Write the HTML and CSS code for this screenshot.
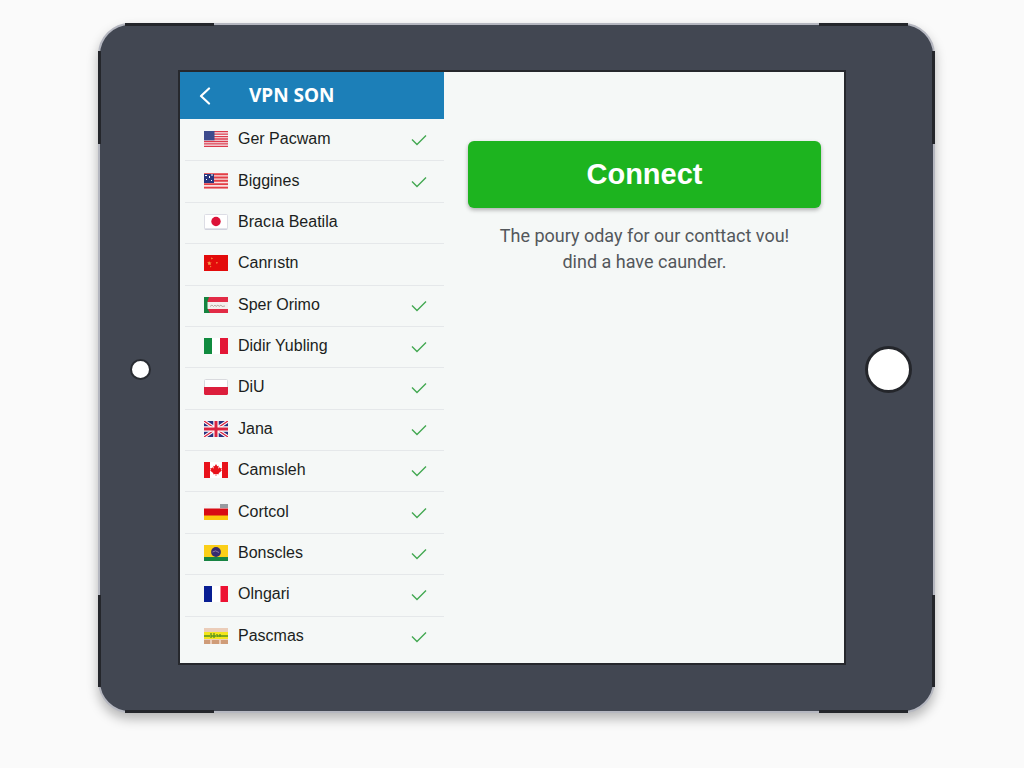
FILE: index.html
```html
<!DOCTYPE html>
<html lang="en">
<head>
<meta charset="utf-8">
<meta name="viewport" content="width=device-width, initial-scale=1">
<title>VPN SON</title>
<link rel="stylesheet" href="styles.css">
</head>
<body>
<div class="tablet">
  <div class="bezel"><span class="camera"></span></div>
  <main class="screen">
    <nav class="sidebar">
      <header class="titlebar">
        <button class="back" type="button" aria-label="Back"><svg width="12" height="18" viewBox="0 0 12 18"><path d="M10 1.500L2 9L10 16.500" fill="none" stroke="#fff" stroke-width="2.200" stroke-linecap="round" stroke-linejoin="round"/></svg></button>
        <h1 class="title">VPN SON</h1>
      </header>
      <ul class="servers">
        <li class="row"><button class="server" type="button">
          <svg class="flag" viewBox="0 0 24 16"><path fill="#f6eef0" d="M0 0h24v16H0z"/><path stroke="#dc3a4c" stroke-width="1.300" d="M0 .7h24M0 3.100h24M0 5.600h24M0 8h24M0 10.500h24M0 12.900h24M0 15.300h24"/><path fill="#3d4b8d" d="M0 0h10.500v9.300H0z"/></svg>
          <span class="name">Ger Pacwam</span><svg class="check" viewBox="0 0 16 12"><path d="M1 5.500L6 10.500L15 1.500"/></svg></button></li>
        <li class="row"><button class="server" type="button">
          <svg class="flag" viewBox="0 0 24 16"><path fill="#f8e0e0" d="M0 0h24v16H0z"/><path stroke="#e23f46" stroke-width="1.900" d="M0 1.200h24M0 4.500h24M0 7.800h24M0 11.100h24M0 14.600h24"/><path fill="#29377f" d="M0 1h10v9H0z"/><path fill="#fff" d="M1 2h2v1H1zM5 3h1v2H5zM2 6h1v1H2zM7 1.500h2v1H7zM7 7h1v1H7z"/></svg>
          <span class="name">Biggines</span><svg class="check" viewBox="0 0 16 12"><path d="M1 5.500L6 10.500L15 1.500"/></svg></button></li>
        <li class="row"><button class="server" type="button">
          <svg class="flag" viewBox="0 0 24 16"><rect x=".5" y=".5" width="23" height="15" rx="1" fill="#fff" stroke="#dcdde5"/><path d="M1 15h22" stroke="#c5c8d5"/><circle cx="12" cy="7.500" r="4.700" fill="#dc1238"/></svg>
          <span class="name">Bracıa Beatila</span></button></li>
        <li class="row"><button class="server" type="button">
          <svg class="flag" viewBox="0 0 24 16"><path fill="#e30b0b" d="M0 0h24v16H0z"/><path fill="#f5a04b" d="M5 6l1 1.400 1.700.2-1.200 1 .2 1.700L5 9.500l-1 .6.300-1.600L3.300 7l1.400.2zM7 2.500l2 .7-1.500 1.200zM12 7l2 .6-1.300 1.400zM6 11l1.500.3-1 1.200z"/></svg>
          <span class="name">Canrıstn</span></button></li>
        <li class="row"><button class="server" type="button">
          <svg class="flag" viewBox="0 0 24 16"><path fill="#e22b46" d="M0 0h24v16H0z"/><path fill="#f3efed" d="M3 5h21v7H3z"/><path fill="#15843f" d="M0 0h5L3.500 4.500v7L6 16H0z"/><path stroke="#b9aaa4" fill="none" d="M6 9.500l2-1.500 1.500 1.500L11 8l1 1.500 2-1.500 1 1.500 2-1.500 1 1.500 3-.5"/></svg>
          <span class="name">Sper Orimo</span><svg class="check" viewBox="0 0 16 12"><path d="M1 5.500L6 10.500L15 1.500"/></svg></button></li>
        <li class="row"><button class="server" type="button">
          <svg class="flag" viewBox="0 0 24 16"><path fill="#fff" d="M0 0h24v16H0z"/><path fill="#108b3f" d="M0 0h8v16H0z"/><path fill="#e31736" d="M16 0h8v16h-8z"/></svg>
          <span class="name">Didir Yubling</span><svg class="check" viewBox="0 0 16 12"><path d="M1 5.500L6 10.500L15 1.500"/></svg></button></li>
        <li class="row"><button class="server" type="button">
          <svg class="flag" viewBox="0 0 24 16"><rect x=".5" y=".5" width="23" height="15" rx="1" fill="#fff" stroke="#d9dade"/><path fill="#dc1e3c" d="M0 8h24v7l-1 1H1l-1-1z"/></svg>
          <span class="name">DiU</span><svg class="check" viewBox="0 0 16 12"><path d="M1 5.500L6 10.500L15 1.500"/></svg></button></li>
        <li class="row"><button class="server" type="button">
          <svg class="flag" viewBox="0 0 24 16"><path fill="#28307f" d="M0 0h24v16H0z"/><path stroke="#fff" stroke-width="3.400" d="M0 0l24 16M24 0L0 16"/><path stroke="#da2440" stroke-width="1.300" d="M0 0l24 16M24 0L0 16"/><path stroke="#fff" stroke-width="5.400" d="M12 0v16M0 8h24"/><path stroke="#da2440" stroke-width="3" d="M12 0v16M0 8h24"/></svg>
          <span class="name">Jana</span><svg class="check" viewBox="0 0 16 12"><path d="M1 5.500L6 10.500L15 1.500"/></svg></button></li>
        <li class="row"><button class="server" type="button">
          <svg class="flag" viewBox="0 0 24 16"><path fill="#fff" d="M0 0h24v16H0z"/><path fill="#e8121b" d="M0 0h6v16H0zM18 0h6v16h-6zM12 2l1.300 2.300 1.400-.6-.5 3 1.600-1.400.4 1 1.500-.2-.6 1.800.8.600-3.300 2.700.3 1.100-2.600-.4V14h-.6v-2.100l-2.600.4.300-1.100L6.100 8.500l.8-.6-.6-1.800 1.500.2.400-1 1.600 1.400-.5-3 1.400.6z"/></svg>
          <span class="name">Camısleh</span><svg class="check" viewBox="0 0 16 12"><path d="M1 5.500L6 10.500L15 1.500"/></svg></button></li>
        <li class="row"><button class="server" type="button">
          <svg class="flag" viewBox="0 0 24 16"><path fill="#f4f4f4" d="M0 0h24v16H0z"/><path fill="#979ba0" d="M16 0h8v4h-8z"/><path fill="#d80b13" d="M0 4.500h24V12H0z"/><path fill="#fcc70d" d="M0 11.500h24V16H0z"/></svg>
          <span class="name">Cortcol</span><svg class="check" viewBox="0 0 16 12"><path d="M1 5.500L6 10.500L15 1.500"/></svg></button></li>
        <li class="row"><button class="server" type="button">
          <svg class="flag" viewBox="0 0 24 16"><path fill="#fbcf18" d="M0 0h24v16H0z"/><path fill="#178443" d="M0 12h24v4H0z"/><circle cx="12" cy="7" r="4.900" fill="#352b70"/><path d="M8.500 7q3-2.500 6.500.5" stroke="#8d77a0" fill="none"/></svg>
          <span class="name">Bonscles</span><svg class="check" viewBox="0 0 16 12"><path d="M1 5.500L6 10.500L15 1.500"/></svg></button></li>
        <li class="row"><button class="server" type="button">
          <svg class="flag" viewBox="0 0 24 16"><path fill="#fff" d="M0 0h24v16H0z"/><path fill="#081e93" d="M0 0h8v16H0z"/><path fill="#ed1233" d="M16.500 0H24v16h-7.500z"/></svg>
          <span class="name">Olngari</span><svg class="check" viewBox="0 0 16 12"><path d="M1 5.500L6 10.500L15 1.500"/></svg></button></li>
        <li class="row"><button class="server" type="button">
          <svg class="flag" viewBox="0 0 24 16"><path fill="#ebcdb9" d="M0 0h24v16H0z"/><path fill="#f3e51b" d="M0 4h24v7H0z"/><path fill="#cf9c78" d="M0 12h6v4H0zM8 12h7v4H8zM17 12h7v4h-7z"/><path stroke="#5a941e" stroke-width="1.300" d="M0 8h6M7 5v5M10 5v5M7 8h5M13 6v3M16 6v3M13 8h11"/></svg>
          <span class="name">Pascmas</span><svg class="check" viewBox="0 0 16 12"><path d="M1 5.500L6 10.500L15 1.500"/></svg></button></li>
      </ul>
    </nav>
    <section class="panel">
      <button class="connect" type="button">Connect</button>
      <p class="message">The poury oday for our conttact vou!<br>dind a have caunder.</p>
    </section>
  </main>
  <div class="bezel"><button class="home" type="button" aria-label="Home"></button></div>
</div>
</body>
</html>
```
FILE: styles.css
```css
* {
  box-sizing: border-box;
}

body {
  margin: 0;
  min-height: 100vh;
  display: flex;
  padding: 23px 89px 55px 98px;
  background: #fafafa;
  font-family: "Liberation Sans", Arial, sans-serif;
  color: #1b1e21;
}

button {
  border: 0;
  padding: 0;
  background: none;
  font: inherit;
  color: inherit;
  cursor: pointer;
}

.tablet {
  --edge: #24262b;
  position: relative;
  flex: 1;
  display: grid;
  grid-template-columns: 78px minmax(0, 1fr) 87px;
  padding: 45px 0 46px;
  border: 2px solid #b5b7c0;
  border-radius: 32px;
  background: #424752;
  box-shadow: 0 6px 12px rgba(0, 0, 0, 0.28);
}

/* Dark strips along the edge, two per side */
.tablet::before {
  content: "";
  position: absolute;
  inset: -2px;
  pointer-events: none;
  background:
    linear-gradient(var(--edge) 0 0) 27px 0 / 89px 3px,
    linear-gradient(var(--edge) 0 0) right 27px top 0 / 89px 3px,
    linear-gradient(var(--edge) 0 0) 27px 100% / 89px 3px,
    linear-gradient(var(--edge) 0 0) right 27px bottom 0 / 89px 3px,
    linear-gradient(var(--edge) 0 0) 0 28px / 3px 93px,
    linear-gradient(var(--edge) 0 0) 100% 28px / 3px 93px,
    linear-gradient(var(--edge) 0 0) left 0 bottom 26px / 3px 92px,
    linear-gradient(var(--edge) 0 0) right 0 bottom 26px / 3px 92px;
  background-repeat: no-repeat;
}

.bezel {
  display: flex;
  align-items: center;
  justify-content: center;
  padding-top: 4px;
}

.camera {
  width: 21px;
  height: 21px;
  margin-left: 2px;
  border: 2px solid #292c32;
  border-radius: 50%;
  background: #fff;
}

.home {
  width: 47px;
  height: 47px;
  margin-right: 2px;
  border: 3px solid #24262b;
  border-radius: 50%;
  background: #fff;
}

.screen {
  display: grid;
  grid-template-columns: 264px minmax(0, 1fr);
  border: 2px solid #26282d;
  background: #f5f8f7;
}

.sidebar {
  display: flex;
  flex-direction: column;
}

.titlebar {
  display: flex;
  align-items: center;
  gap: 38px;
  height: 47px;
  padding: 0 19px;
  background: #1c7fb8;
  color: #fff;
}

.back {
  display: flex;
}

.title {
  margin: 0;
  padding-bottom: 2px;
  font: bold 19px/24px "Noto Sans", sans-serif;
}

.servers {
  flex: 1;
  display: grid;
  grid-auto-rows: 1fr;
  margin: 0;
  padding: 0 0 6px 5px;
  list-style: none;
}

.row {
  display: flex;
}

.row + .row {
  border-top: 1px solid #e5e8ea;
}

.server {
  flex: 1;
  display: flex;
  align-items: center;
  gap: 10px;
  padding: 0 17px 2px 19px;
  font-size: 16px;
  line-height: 20px;
  text-align: left;
}

.flag {
  flex: none;
  width: 24px;
  height: 16px;
}

.name {
  flex: 1;
}

.check {
  width: 16px;
  height: 12px;
  margin-top: 2px;
  fill: none;
  stroke: #43a852;
  stroke-width: 1.4;
}

.panel {
  padding: 69px 23px 24px 24px;
  text-align: center;
}

.connect {
  width: 100%;
  height: 67px;
  border-radius: 6px;
  background: #1db41f;
  box-shadow: 0 2px 4px rgba(0, 0, 0, 0.3);
  color: #fff;
  font-size: 29px;
  font-weight: bold;
}

.message {
  margin: 15px 0 0;
  color: #53575b;
  font-family: Roboto, sans-serif;
  font-size: 18px;
  line-height: 26px;
}
```
